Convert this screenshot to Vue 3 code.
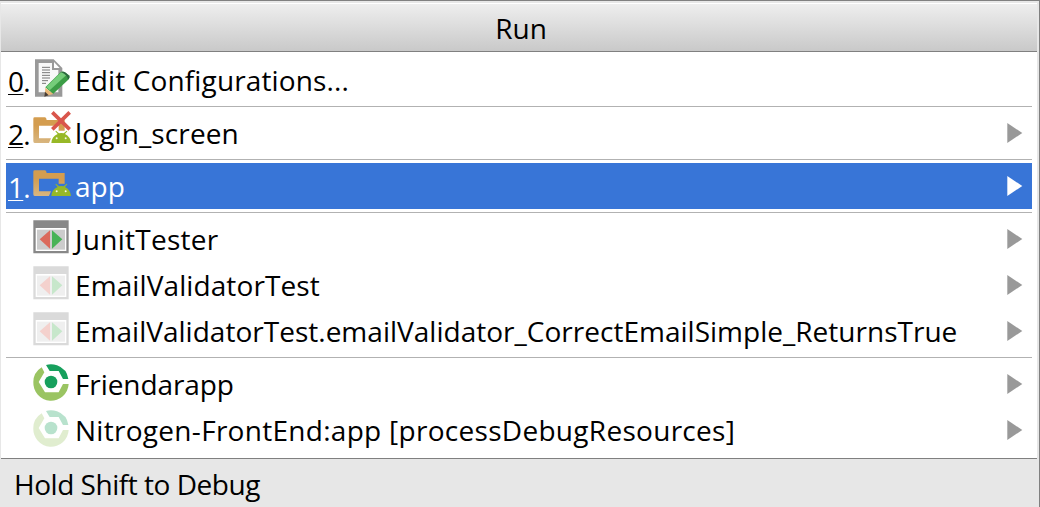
<script setup>
const groups = [
  [{ key: '0', icon: 'edit', label: 'Edit Configurations...', fit: 'fit-edit' }],
  [{ key: '2', icon: 'folder', broken: true, label: 'login_screen', fit: 'fit-login', sub: true }],
  [{ key: '1', icon: 'folder', label: 'app', fit: 'fit-app', sub: true, selected: true }],
  [
    { icon: 'junit', label: 'JunitTester', fit: 'fit-junit', sub: true },
    { icon: 'junit', faded: true, label: 'EmailValidatorTest', fit: 'fit-email', sub: true },
    { icon: 'junit', faded: true, label: 'EmailValidatorTest.emailValidator_CorrectEmailSimple_ReturnsTrue', fit: 'fit-long', sub: true },
  ],
  [
    { icon: 'gradle', label: 'Friendarapp', fit: 'fit-friend', sub: true },
    { icon: 'gradle', faded: true, label: 'Nitrogen-FrontEnd:app [processDebugResources]', fit: 'fit-nitro', sub: true },
  ],
]
</script>

<template>
  <div class="popup">
    <div class="panel">
      <header class="title"><span>Run</span></header>
      <ul class="menu">
        <template v-for="(group, g) in groups" :key="g">
          <li v-if="g > 0" class="separator"></li>
          <li v-for="item in group" :key="item.label" class="row" :class="{ selected: item.selected }">
            <span class="key"><template v-if="item.key"><u>{{ item.key }}</u>.</template></span>
            <svg class="icon" :class="{ faded: item.faded }" viewBox="0 0 114 114">
              <g v-if="item.icon === 'edit'">
                <path d="M9 1H65L91 27V113H9Z" fill="#999" />
                <path d="M20 12H60V33H79V100H20Z" fill="#f8f8f8" />
                <path d="M66 9L83 27H66Z" fill="#fff" />
                <path d="M30 25H54M30 33H54M30 41H54M30 49H54M30 57H54M30 65H48M30 73H42" stroke="#777" stroke-width="3" />
                <path d="M40 85L84 41Q90 35 98 39L111 49Q116 54 108 63L63 105Z" fill="#3c9d46" />
                <path d="M43 84L86 41Q91 38 98 42L104 47L53 94Z" fill="#75cd7a" />
                <path d="M88 40Q94 36 102 42L111 50Q115 55 108 62Q107 49 88 40Z" fill="#2d6840" />
                <path d="M40 86L64 105L38 112Z" fill="#e9b878" />
                <path d="M39 98L50 109L37 113Z" fill="#453b35" />
              </g>
              <g v-else-if="item.icon === 'folder'">
                <path d="M4 20Q4 16 8 16H39Q43 16 44 24H98V56H80V41H21V79H57L51 93H8Q4 93 4 88Z" :fill="`url(#folder-${item.label})`" />
                <path d="M58 93Q59 73 77 66L70 58L72 56L81 64Q88 62 95 64L104 56L106 58L99 66Q115 74 117 93Z" fill="#97b827" />
                <circle cx="74" cy="79" r="3" fill="#f5f8e4" />
                <circle cx="101" cy="79" r="3" fill="#f5f8e4" />
                <path v-if="item.broken" d="M61 1L113 52M113 1L61 52" stroke="#d9564c" stroke-width="11" />
                <linearGradient :id="`folder-${item.label}`" x1="0.4" y1="0" x2="0.3" y2="1">
                  <stop offset="0.35" stop-color="#d49d4f" />
                  <stop offset="1" stop-color="#d8b680" />
                </linearGradient>
              </g>
              <g v-else-if="item.icon === 'junit'">
                <path d="M4 7H110V106H4Z" fill="#888" />
                <path d="M11 30H103V99H11Z" fill="#fff" />
                <path d="M15 35H99V95H15Z" fill="#ccc" />
                <path d="M54 37V92L23 64Z" fill="#db6a5c" />
                <path d="M60 37V92L91 64Z" fill="#48b357" />
              </g>
              <g v-else>
                <path d="M29 13Q4 29 4 57A53 53 0 0 0 110 63H93L80 88H39L20 57L37 28Z" fill="#9ac462" />
                <path d="M42 6Q58 1 75 7Q105 18 109 48H93L80 24H53Z" fill="#17a05d" />
                <circle cx="57" cy="57" r="19" fill="#17a05d" />
              </g>
            </svg>
            <span class="label" :class="item.fit">{{ item.label }}</span>
            <svg v-if="item.sub" class="arrow" viewBox="0 0 16 20"><path d="M0.3 0L15.3 10L0.3 20Z" /></svg>
          </li>
        </template>
      </ul>
    </div>
    <footer class="hint"><span>Hold Shift to Debug</span></footer>
  </div>
</template>

<style>
body {
  margin: 0;
  overflow: hidden;
}
</style>

<style scoped>
.popup {
  box-sizing: border-box;
  width: 1040px;
  height: 507px;
  padding: 2px 2px 0 1px;
  border-top: 1px solid #808080;
  border-right: 1px solid #808080;
  background: #e7e7e7;
  color: #000;
  font: 28px/46px "Open Sans", "Noto Sans", sans-serif;
  overflow: hidden;
}
.panel {
  background: #fff;
  border-bottom: 1px solid #808080;
}
.title {
  box-sizing: border-box;
  height: 49px;
  border-top: 1px solid #fff;
  border-bottom: 1px solid #808080;
  background: linear-gradient(#eee, #c9c9c9);
  text-align: center;
  line-height: 49px;
  padding-left: 4px;
}
.menu {
  list-style: none;
  margin: 0;
  padding: 5px;
}
.row {
  display: flex;
  height: 46px;
  white-space: pre;
}
.selected {
  background: #3875d7;
  color: #fff;
}
.separator {
  height: 1px;
  margin: 3px 0;
  background: #b2b2b2;
}
.key {
  width: 24px;
  padding: 1px 0 0 2px;
  flex: none;
  letter-spacing: -0.7px;
}
.key u {
  text-decoration-thickness: 1px;
  text-underline-offset: 2px;
  text-decoration-skip-ink: none;
}
.icon {
  width: 38px;
  height: 38px;
  margin-top: 2px;
  flex: none;
  overflow: visible;
}
.faded {
  opacity: 0.3;
}
.label {
  margin-left: 5px;
}
.fit-edit {
  letter-spacing: 0.14px;
}
.fit-login {
  letter-spacing: 0.12px;
}
.fit-junit {
  letter-spacing: 0.27px;
}
.fit-email {
  letter-spacing: 0.1px;
}
.fit-long {
  letter-spacing: 0.015px;
}
.fit-friend {
  letter-spacing: -0.09px;
}
.fit-nitro {
  letter-spacing: 0.29px;
}
.arrow {
  width: 16px;
  height: 20px;
  margin: 13px 9px 0 auto;
  fill: #999;
}
.selected .arrow {
  fill: #fff;
}
.hint {
  padding-left: 13px;
  line-height: 51px;
  letter-spacing: -0.47px;
}
</style>
